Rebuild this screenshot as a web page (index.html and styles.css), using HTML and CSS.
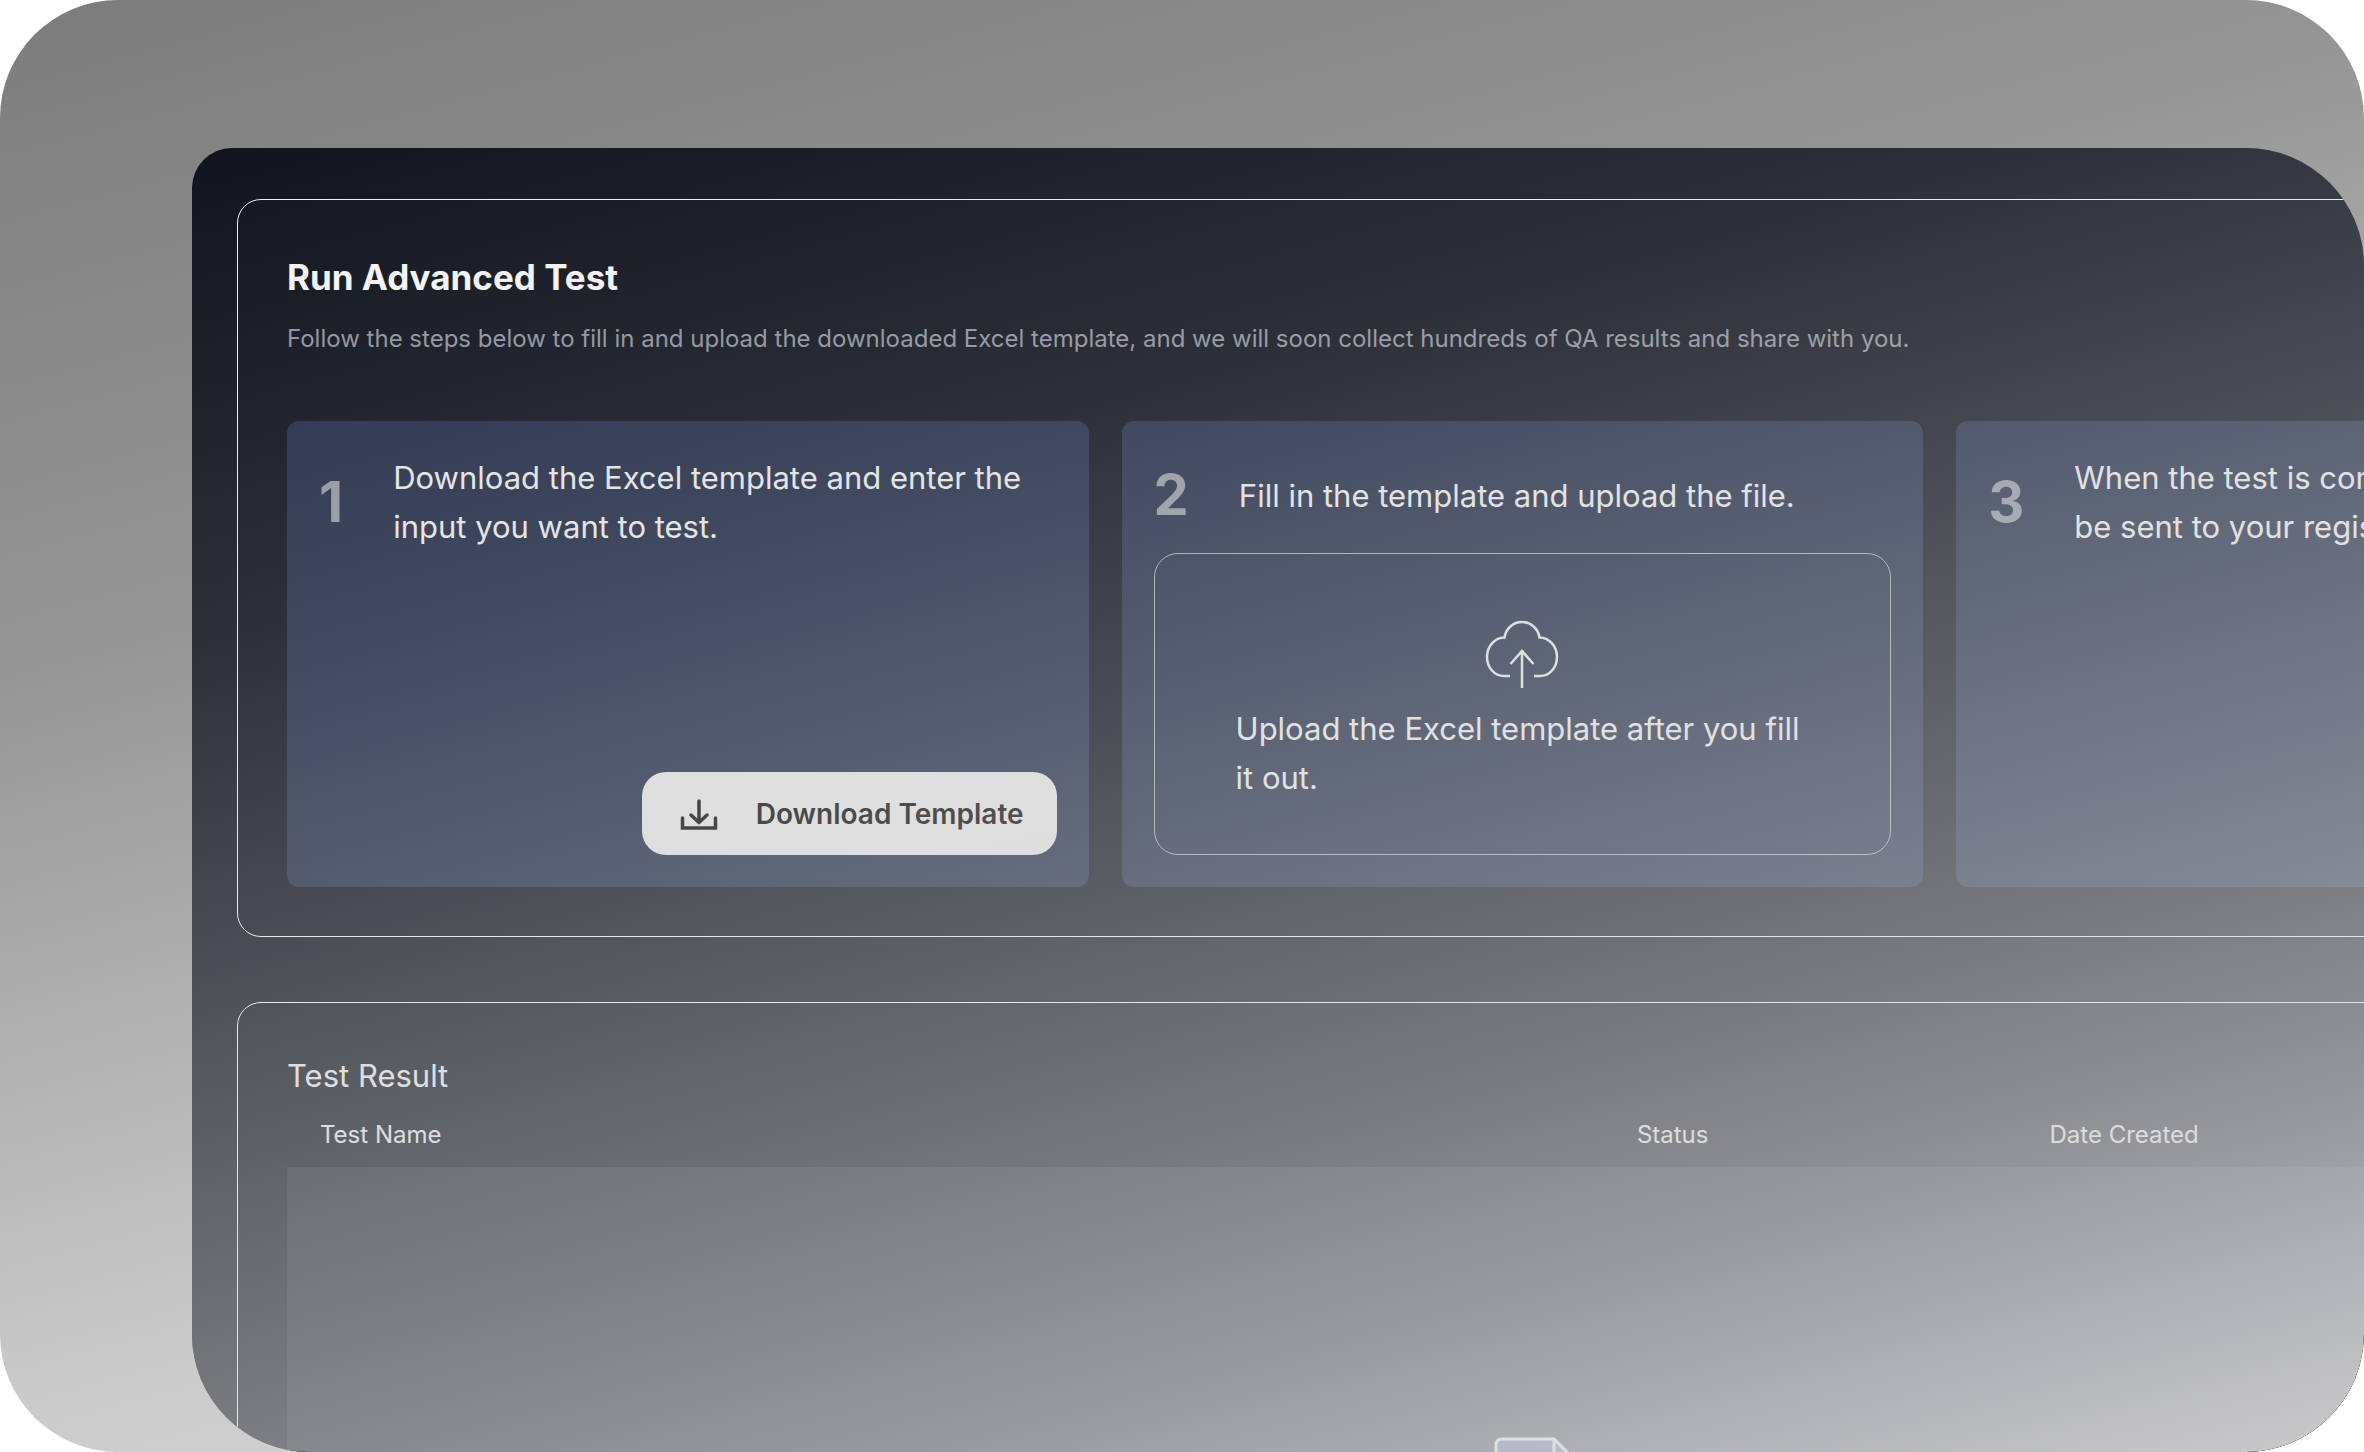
FILE: index.html
```html
<!DOCTYPE html>
<html lang="en">
<head>
    <meta charset="UTF-8">
    <meta name="viewport" content="width=device-width, initial-scale=1.0">
    <title>Run Advanced Test</title>
    <link rel="stylesheet" href="styles.css">
</head>
<body>
    <div class="frame">
        <main class="panel">
            <div class="content">
                <section class="box">
                    <h1>Run Advanced Test</h1>
                    <p class="subtitle">Follow the steps below to fill in and upload the downloaded Excel template, and we will soon collect hundreds of QA results and share with you.</p>
                    <div class="steps">
                        <div class="step">
                            <div class="step-head">
                                <span class="step-number">1</span>
                                <p class="step-text">Download the Excel template and enter the input you want to test.</p>
                            </div>
                            <button type="button" class="btn">
                                <svg class="btn-icon" viewBox="0 0 48 48" fill="none" stroke="currentColor" stroke-width="3.500" stroke-linecap="round" stroke-linejoin="round">
                                    <path d="M24 11V32M16 25L24 32.500L32 25"/>
                                    <path d="M7.500 28V38H40.500V28" stroke-linejoin="miter"/>
                                </svg>
                                Download Template
                            </button>
                        </div>
                        <div class="step">
                            <div class="step-head">
                                <span class="step-number">2</span>
                                <p class="step-text">Fill in the template and upload the file.</p>
                            </div>
                            <label class="upload" for="template-file">
                                <input type="file" id="template-file" class="upload-input">
                                <svg class="upload-icon" viewBox="0 0 98 98" fill="none" stroke="currentColor" stroke-width="2.500">
                                    <path d="M37 75H31C21 75 14 66 14 56C14 45 22 36.500 31.500 36.500C33 27 40.500 21 49 21C57.500 21 65 27 66.500 36.500C76 36.500 84 45 84 56C84 66 77 75 67 75H61"/>
                                    <path d="M49 87V50M37.500 63L49 50L60.500 63"/>
                                </svg>
                                <span class="upload-text">Upload the Excel template after you fill it out.</span>
                            </label>
                        </div>
                        <div class="step">
                            <div class="step-head">
                                <span class="step-number">3</span>
                                <p class="step-text">When the test is completed, it will<br>be sent to your registered email.</p>
                            </div>
                        </div>
                    </div>
                </section>

                <section class="box">
                    <h2>Test Result</h2>
                    <table class="results">
                        <thead>
                            <tr>
                                <th class="col-name">Test Name</th>
                                <th class="col-status">Status</th>
                                <th class="col-date">Date Created</th>
                            </tr>
                        </thead>
                        <tbody>
                            <tr>
                                <td colspan="3" class="empty">
                                    <svg class="empty-icon" viewBox="0 0 112 112" stroke="currentColor" stroke-width="3">
                                        <path class="empty-page" d="M30 110V8Q30 2 36 2H88L112 26V110Z"/>
                                        <path d="M88 2V26H112" fill="none"/>
                                    </svg>
                                </td>
                            </tr>
                        </tbody>
                    </table>
                </section>
            </div>
        </main>
    </div>
</body>
</html>
```
FILE: styles.css
```css
* {
    margin: 0;
    padding: 0;
    box-sizing: border-box;
}

body {
    font-family: Inter, "Liberation Sans", sans-serif;
    background-color: #fff;
    color: #f5f5f5;
}

.frame {
    height: 100vh;
    padding: 148px 0 0 192px;
    border-radius: 118px;
    overflow: hidden;
    background: linear-gradient(165deg, #7c7c7c 0%, #959595 32%, #b0b0b0 50%, #cbcbcb 68%, #dedede 100%);
}

.panel {
    position: relative;
    isolation: isolate;
    height: 100%;
    border-radius: 40px 118px 118px 118px;
    overflow: hidden;
    background-color: #10141e;
}

/* light haze over the whole panel */
.panel::after {
    content: "";
    position: absolute;
    inset: 0;
    pointer-events: none;
    background: linear-gradient(165deg,
        rgba(217, 217, 219, 0) 0%,
        rgba(217, 217, 219, 0.14) 26%,
        rgba(217, 217, 219, 0.27) 41%,
        rgba(217, 217, 219, 0.38) 53%,
        rgba(217, 217, 219, 0.51) 67%,
        rgba(217, 217, 219, 0.65) 80%,
        rgba(217, 217, 219, 0.92) 100%);
}

/* wider than the panel, the right side is cut off */
.content {
    width: 122.5%;
    padding: 51px 45px;
    display: flex;
    flex-direction: column;
    gap: 65px;
}

.box {
    padding: 49px;
    border: 1px solid #f0f0f0;
    border-radius: 24px;
}

h1 {
    font-size: 35px;
    line-height: 56px;
    font-weight: 700;
}

.subtitle {
    margin-top: 16px;
    font-size: 24px;
    line-height: 36px;
    color: #8f939e;
}

.steps {
    display: grid;
    grid-template-columns: repeat(3, 1fr);
    gap: 33px;
    margin-top: 64px;
}

.step {
    display: flex;
    flex-direction: column;
    justify-content: space-between;
    min-height: 466px;
    padding: 32px;
    border-radius: 12px;
    background-color: #242e48;
}

.step-head {
    display: flex;
    align-items: center;
    gap: 50px;
}

.step-number {
    font-size: 56px;
    line-height: 84px;
    font-weight: 700;
    color: #9297a0;
}

.step-text,
.upload-text {
    font-size: 31px;
    line-height: 49px;
    color: #e6e6e6;
}

.btn {
    align-self: flex-end;
    display: flex;
    align-items: center;
    gap: 33px;
    height: 83px;
    padding: 0 33px;
    border: none;
    border-radius: 24px;
    background-color: #e1e1e1;
    color: #0c0c0c;
    font-family: inherit;
    font-size: 28px;
    font-weight: 600;
    cursor: pointer;
}

.btn-icon {
    width: 48px;
    height: 48px;
}

.upload {
    display: flex;
    flex-direction: column;
    align-items: center;
    gap: 5px;
    padding: 47px 81px 52px;
    border: 1px solid #a5a9b0;
    border-radius: 24px;
    color: #e2e2e2;
    cursor: pointer;
}

.upload-input {
    position: absolute;
    width: 1px;
    height: 1px;
    opacity: 0;
}

.upload-icon {
    width: 98px;
    height: 98px;
}

h2 {
    font-size: 31px;
    line-height: 48px;
    font-weight: 400;
    color: #e2e2e2;
}

.results {
    width: 100%;
    border-collapse: collapse;
    table-layout: fixed;
}

.results th {
    height: 67px;
    padding: 2px 33px 0;
    font-size: 24px;
    font-weight: 400;
    text-align: left;
    color: #e2e2e2;
}

.col-name {
    width: 53.3%;
}

.col-status {
    width: 16.7%;
}

.col-date {
    width: 30%;
}

.empty {
    height: 655px;
    background-color: #22262e;
    text-align: center;
}

.empty-icon {
    width: 112px;
    height: 112px;
}

.empty-page {
    fill: #4a5a8c;
}
```
